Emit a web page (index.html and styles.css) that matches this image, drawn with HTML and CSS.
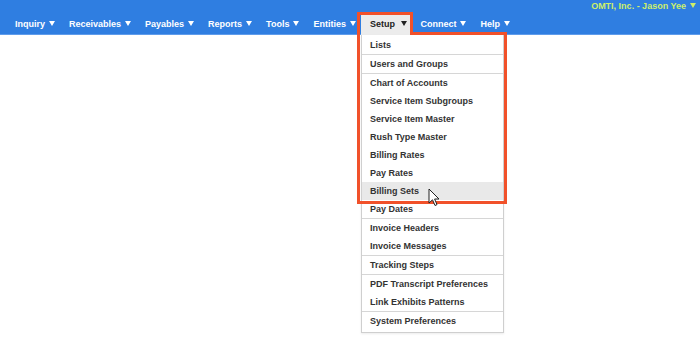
FILE: index.html
```html
<!DOCTYPE html>
<html lang="en">
<head>
    <meta charset="UTF-8">
    <meta name="viewport" content="width=device-width, initial-scale=1.0">
    <title>Setup Menu</title>
    <link rel="stylesheet" href="styles.css">
</head>
<body>
    <header class="topbar">
        <div class="user-row">
            <span class="user-name caret">OMTI, Inc. - Jason Yee</span>
        </div>
        <ul class="main-nav">
            <li class="nav-item caret">Inquiry</li>
            <li class="nav-item caret">Receivables</li>
            <li class="nav-item caret">Payables</li>
            <li class="nav-item caret">Reports</li>
            <li class="nav-item caret">Tools</li>
            <li class="nav-item caret">Entities</li>
            <li class="nav-item caret active">Setup
                <ul class="dropdown">
                    <li class="menu-group">
                        <div class="menu-link">Lists</div>
                    </li>
                    <li class="menu-group">
                        <div class="menu-link">Users and Groups</div>
                    </li>
                    <li class="menu-group">
                        <div class="menu-link">Chart of Accounts</div>
                        <div class="menu-link">Service Item Subgroups</div>
                        <div class="menu-link">Service Item Master</div>
                        <div class="menu-link">Rush Type Master</div>
                        <div class="menu-link">Billing Rates</div>
                        <div class="menu-link">Pay Rates</div>
                        <div class="menu-link hover">Billing Sets</div>
                        <div class="menu-link">Pay Dates</div>
                    </li>
                    <li class="menu-group">
                        <div class="menu-link">Invoice Headers</div>
                        <div class="menu-link">Invoice Messages</div>
                    </li>
                    <li class="menu-group">
                        <div class="menu-link">Tracking Steps</div>
                    </li>
                    <li class="menu-group">
                        <div class="menu-link">PDF Transcript Preferences</div>
                        <div class="menu-link">Link Exhibits Patterns</div>
                    </li>
                    <li class="menu-group">
                        <div class="menu-link">System Preferences</div>
                    </li>
                </ul>
            </li>
            <li class="nav-item caret">Connect</li>
            <li class="nav-item caret">Help</li>
        </ul>
    </header>

    <!-- callout drawn over the screenshot -->
    <svg class="callout" width="700" height="337" viewBox="0 0 700 337">
        <path d="M358.5 13.5 H411.5 V33.5 H505.5 V202.5 H358.5 Z" fill="none" stroke="#f1512a" stroke-width="3"/>
    </svg>

    <svg class="cursor" width="14" height="20" viewBox="0 0 14 20">
        <path d="M1 1 V15 L4.5 11.8 L7 17.5 L9 16.6 L6.6 11 H11 Z" fill="#fff" stroke="#222" stroke-width="1" stroke-linejoin="round"/>
    </svg>
</body>
</html>
```

FILE: styles.css
```css
* {
    margin: 0;
    padding: 0;
    box-sizing: border-box;
}

body {
    font-family: 'Liberation Sans', Arial, sans-serif;
    font-size: 9px;
    font-weight: 700;
    background: #fff;
    min-height: 337px;
    position: relative;
}

.topbar {
    background: #2f7ee1;
    height: 35px;
    border-bottom: 1px solid #5f9ceb;
}

.user-row {
    height: 12px;
    text-align: right;
    padding-right: 4px;
    line-height: 12px;
}

.user-name {
    color: #cdef6a;
}

.caret::after {
    content: '';
    display: inline-block;
    margin-left: 4px;
    vertical-align: 1px;
    border-left: 3px solid transparent;
    border-right: 3px solid transparent;
    border-top: 5px solid currentColor;
}

.main-nav {
    list-style: none;
    display: flex;
    padding-left: 8px;
    height: 23px;
}

.nav-item {
    position: relative;
    color: #fff;
    padding: 0 7px;
    line-height: 24px;
    cursor: pointer;
}

.nav-item.active {
    background: #ececec;
    color: #222;
    padding: 0 6px 0 9px;
    margin-left: -2px;
}

.dropdown {
    list-style: none;
    position: absolute;
    top: 23px;
    left: 0;
    width: 143px;
    background: #fff;
    border: 1px solid #cfcfcf;
    border-top: none;
    padding-top: 1px;
    box-shadow: 0 1px 2px rgba(0, 0, 0, 0.08);
    line-height: 18px;
    z-index: 10;
}

.menu-group {
    border-bottom: 1px solid #d6d6d6;
}

.menu-group:last-child {
    border-bottom: none;
    padding-bottom: 2px;
}

.menu-link {
    height: 18px;
    line-height: 18px;
    padding: 0 8px;
    color: #333;
    white-space: nowrap;
}

.menu-link.hover {
    background: #e9e9e9;
}

.callout {
    position: absolute;
    top: 0;
    left: 0;
    z-index: 20;
    pointer-events: none;
}

.cursor {
    position: absolute;
    top: 188px;
    left: 428px;
    z-index: 30;
}
```
